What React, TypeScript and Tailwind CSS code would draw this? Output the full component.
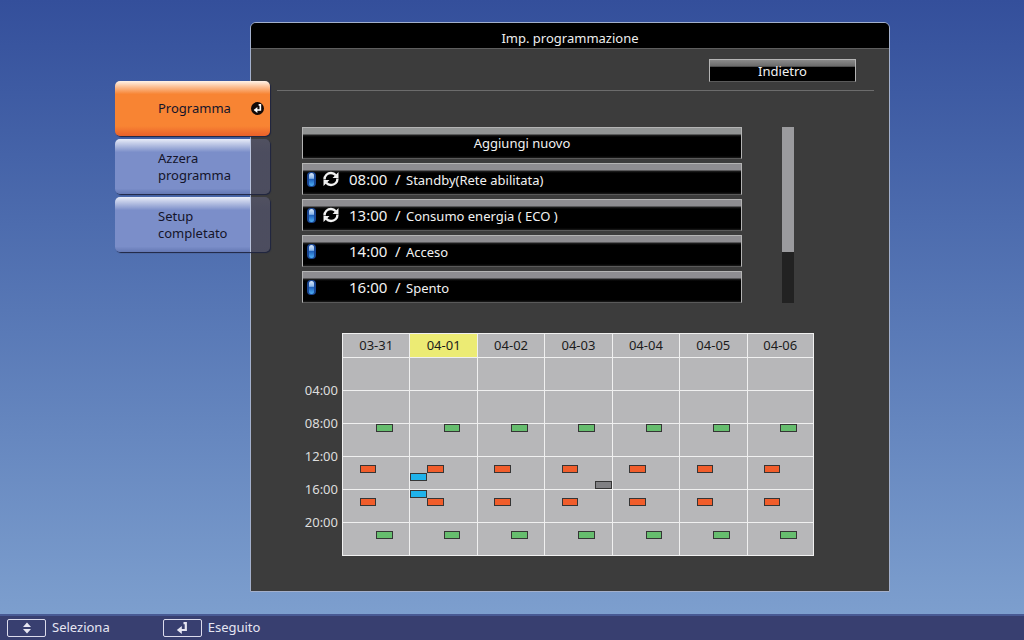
import { clsx } from "clsx";
import React from "react";

const menu = [
  { label: "Programma", active: true },
  { label: "Azzera programma", active: false },
  { label: "Setup completato", active: false },
];

const schedules = [
  { time: "08:00", action: "Standby(Rete abilitata)", repeat: true },
  { time: "13:00", action: "Consumo energia ( ECO )", repeat: true },
  { time: "14:00", action: "Acceso", repeat: false },
  { time: "16:00", action: "Spento", repeat: false },
];

const days = ["03-31", "04-01", "04-02", "04-03", "04-04", "04-05", "04-06"];
const today = "04-01";

// Each row of the calendar covers four hours, the label is its lower edge
const rows = [
  { start: 0, label: "04:00" },
  { start: 4, label: "08:00" },
  { start: 8, label: "12:00" },
  { start: 12, label: "16:00" },
  { start: 16, label: "20:00" },
  { start: 20, label: "" },
];

type Event = { hour: number; slot: number; color: string; day?: string };

// Events without a day are repeated every day
const events: Event[] = [
  { hour: 8, slot: 2, color: "bg-[#66bd6e]" },
  { hour: 13, slot: 1, color: "bg-[#f15d2b]" },
  { hour: 14, slot: 0, color: "bg-[#1fb2ea]", day: "04-01" },
  { hour: 15, slot: 3, color: "bg-[#808083]", day: "04-03" },
  { hour: 16, slot: 0, color: "bg-[#1fb2ea]", day: "04-01" },
  { hour: 17, slot: 1, color: "bg-[#f15d2b]" },
  { hour: 21, slot: 2, color: "bg-[#66bd6e]" },
];

function ReturnArrow({ className }: { className?: string }) {
  return (
    <svg viewBox="0 0 12 12" className={className} aria-hidden="true">
      <path
        d="M7.500 1.200H9.800V8H5"
        fill="none"
        stroke="currentColor"
        strokeWidth="2.200"
      />
      <path d="M.800 8 5.800 4v8z" fill="currentColor" />
    </svg>
  );
}

function RepeatIcon() {
  return (
    <svg viewBox="0 0 16 16" className="h-4 w-4" aria-hidden="true">
      <g fill="none" stroke="currentColor" strokeWidth="2.400">
        <path d="M1.500 8.500C1.500 4.500 4.500 2 8 2c2 0 3.600.700 4.800 2.200" />
        <path d="M14.500 7.500c0 4-3 6.500-6.500 6.500-2 0-3.600-.700-4.800-2.200" />
      </g>
      <path d="M15.500 1v6h-6zM.500 15V9h6z" fill="currentColor" />
    </svg>
  );
}

function StatusLamp() {
  return (
    <svg viewBox="0 0 9 15" className="h-[15px] w-[9px]" aria-hidden="true">
      <defs>
        <linearGradient id="lamp" x1="0" y1="0" x2="0" y2="1">
          <stop offset="0" stopColor="#dbe8f8" />
          <stop offset="0.400" stopColor="#8db8ea" />
          <stop offset="0.500" stopColor="#1f62bd" />
          <stop offset="1" stopColor="#4fb0f4" />
        </linearGradient>
      </defs>
      <rect width="9" height="15" rx="4" fill="#1a4794" />
      <rect x="2" y="1" width="5" height="13" rx="2.500" fill="url(#lamp)" />
    </svg>
  );
}

const glossy =
  "border border-[#b4b4b4] border-b-[#5a5a5a] text-[#f2f2f2] focus:outline-none";

export default function App() {
  return (
    <div className="flex min-h-screen flex-col bg-linear-to-b from-[#344f9b] to-[#80a2d0] font-['Noto_Sans',sans-serif] text-[13px]">
      <div className="flex flex-1 items-stretch pt-[22px] pr-[134px] pb-[22px] pl-[115px]">
        <nav className="z-10 -mr-5 w-[155px] shrink-0 pt-[59px]">
          <ul className="flex flex-col gap-[3px]">
            {menu.map((item) => (
              <li key={item.label}>
                <button
                  className={clsx(
                    "flex h-[55px] w-full items-center rounded-[5px] pr-1.5 pl-[43px] text-left leading-[17px] text-[#14142a] shadow-[1px_1px_1px_#1e2440]",
                    item.active
                      ? "bg-[linear-gradient(to_bottom,#fff3e8,#fbb98a_12%,#f88433_24%,#f88433_82%,#e9602a)]"
                      : "bg-[linear-gradient(to_right,#4a4a5a00_135px,#b8c2dc_135px,#b8c2dc_136px,#4a4a5af4_136px),linear-gradient(to_bottom,#e8ecf8,#7b8ec9_24%,#7b8ec9_90%,#6478b4)]"
                  )}
                >
                  <span className="w-[78px]">{item.label}</span>
                  {item.active && (
                    <span className="ml-auto flex h-[13px] w-[13px] items-center justify-center rounded-full bg-[#120a08] text-white">
                      <ReturnArrow className="h-[9px] w-[9px]" />
                    </span>
                  )}
                </button>
              </li>
            ))}
          </ul>
        </nav>

        <main className="min-w-0 flex-1 rounded-t-md border border-[#a3b0cc] bg-[#3c3c3c]">
          <h1 className="flex h-[26px] items-center justify-center rounded-t-[5px] border-b border-[#5e5e5e] bg-black pt-1.5 text-[#eeeeee]">
            Imp. programmazione
          </h1>

          <div className="mr-[15px] ml-[26px] flex justify-end border-b border-[#6c6c6c] pt-2.5 pr-[18px] pb-2">
            <button
              className={clsx(
                glossy,
                "flex h-[23px] w-[147px] items-center justify-center bg-linear-to-b from-[#8a8a8a] from-0% via-[#6a6a6a] via-30% to-black to-35% pt-0.5"
              )}
            >
              Indietro
            </button>
          </div>

          <div className="mt-9 mr-[95px] ml-[51px] flex gap-10">
            <ul className="flex flex-1 flex-col gap-1">
              <li>
                <button
                  className={clsx(
                    glossy,
                    "flex h-8 w-full items-center justify-center bg-[linear-gradient(to_bottom,#929494_6px,#222_7px,#000_9px,#000_28px,#1c1c1c)] pt-0.5"
                  )}
                >
                  Aggiungi nuovo
                </button>
              </li>
              {schedules.map((item) => (
                <li key={item.time}>
                  <button
                    className={clsx(
                      glossy,
                      "flex h-8 w-full items-center bg-[linear-gradient(to_bottom,#8e8d91_6px,#222_7px,#000_9px,#000_28px,#1c1c1c)] pl-1"
                    )}
                  >
                    <StatusLamp />
                    <span className="ml-[7px] w-[26px]">
                      {item.repeat && <RepeatIcon />}
                    </span>
                    <span className="flex items-baseline">
                      <span className="w-[46px] text-left text-[15px]">
                        {item.time}
                      </span>
                      <span className="w-[11px] text-left text-[15px]">/</span>
                      <span>{item.action}</span>
                    </span>
                  </button>
                </li>
              ))}
            </ul>
            <div className="w-3 bg-[#222222]">
              <div className="h-[71%] bg-[#9b9b9e]" />
            </div>
          </div>

          <table className="mt-[30px] ml-[51px] w-[calc(100%-126px)] table-fixed border-separate border-spacing-0">
            <thead>
              <tr>
                <td className="w-10" />
                {days.map((day) => (
                  <th
                    key={day}
                    scope="col"
                    className={clsx(
                      "h-[25px] border-t border-b border-l border-[#f0f0f0] p-0 font-normal text-[#1c1c1c] last:border-r",
                      day === today ? "bg-[#eceb74]" : "bg-[#b7b7b9]"
                    )}
                  >
                    {day}
                  </th>
                ))}
              </tr>
            </thead>
            <tbody>
              {rows.map((row) => (
                <tr key={row.start}>
                  <th
                    scope="row"
                    className="h-[33px] p-0 pr-1 pb-px text-right align-bottom font-normal text-[#dedede]"
                  >
                    <span className="block translate-y-1/2">{row.label}</span>
                  </th>
                  {days.map((day) => (
                    <td
                      key={day}
                      className="relative border-b border-l border-[#f0f0f0] bg-[#b7b7b9] p-0 last:border-r"
                    >
                      {events
                        .filter(
                          (e) =>
                            e.hour >= row.start &&
                            e.hour < row.start + 4 &&
                            (!e.day || e.day === day)
                        )
                        .map((e) => (
                          <span
                            key={e.hour}
                            className={clsx(
                              "absolute h-1/4 w-1/4 border border-[#353535]",
                              e.color
                            )}
                            style={{
                              left: `${e.slot * 25}%`,
                              top: `${(e.hour - row.start) * 25}%`,
                            }}
                          />
                        ))}
                    </td>
                  ))}
                </tr>
              ))}
            </tbody>
          </table>
        </main>
      </div>

      <footer className="flex h-[26px] items-center gap-[53px] border-t-2 border-[#485a94] bg-[#383f70] px-[7px] text-[#e6e6f2]">
        <div className="flex items-center gap-1.5">
          <span className="flex h-[18px] w-[39px] items-center justify-center rounded-xs border border-[#dcdcec]">
            <svg viewBox="0 0 10 12" className="h-3 w-2.5" aria-hidden="true">
              <path d="M5 .500l4 4.500H1zM5 11.500l4-4.500H1z" fill="currentColor" />
            </svg>
          </span>
          Seleziona
        </div>
        <div className="flex items-center gap-1.5">
          <span className="flex h-[18px] w-[39px] items-center justify-center rounded-xs border border-[#dcdcec]">
            <ReturnArrow className="h-3 w-3" />
          </span>
          Eseguito
        </div>
      </footer>
    </div>
  );
}
